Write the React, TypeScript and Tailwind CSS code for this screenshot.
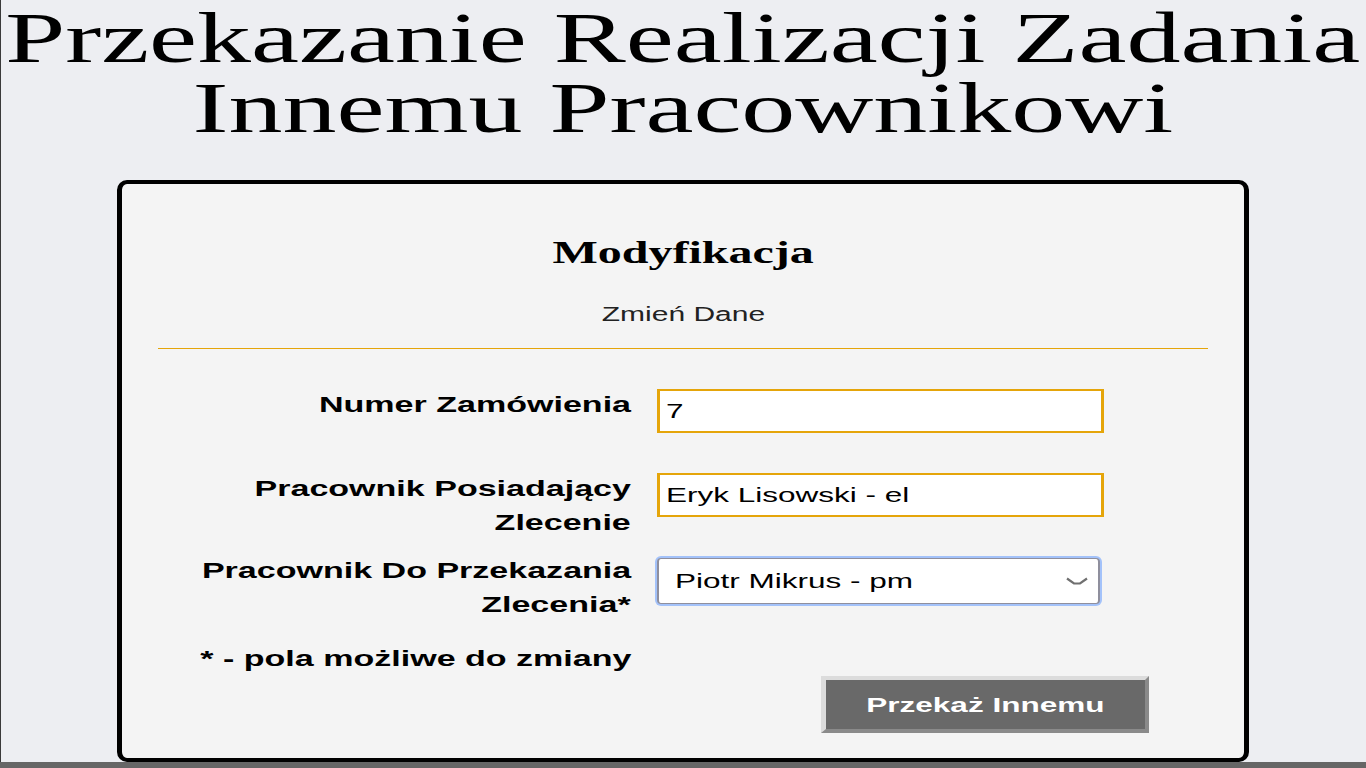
import type { ReactNode } from "react";
import clsx from "clsx";

// the page in the picture is stretched ~1.5x sideways, so text gets the same widening
function Wide({ children, className }: { children: ReactNode; className?: string }) {
  return <span className={clsx("inline-block scale-x-150", className)}>{children}</span>;
}

function Label({ lines }: { lines: string[] }) {
  return (
    <div className="w-[473px] shrink-0 text-right text-[22.7px] font-bold leading-[34px]">
      {lines.map((line) => (
        <span key={line} className="block">
          <Wide className="origin-right">{line}</Wide>
        </span>
      ))}
    </div>
  );
}

function Field({ value, className }: { value: string; className?: string }) {
  return (
    <div
      className={clsx(
        "flex h-[44px] w-[447px] items-center border-x-[3px] border-y-2 border-[#e5a50a] bg-white pl-[6px] text-[21px] leading-[24px]",
        className
      )}
    >
      <Wide className="origin-left">{value}</Wide>
    </div>
  );
}

export default function App() {
  return (
    <div className="min-h-[768px] bg-[#edeef2] font-['Liberation_Sans',Arial,sans-serif] text-black shadow-[inset_1px_0_0_#3a3a3a]">
      <h1 className="pt-[3px] text-center font-['Liberation_Serif','Times_New_Roman',serif] text-[72px] font-normal leading-[70px]">
        <span className="block">
          <Wide>Przekazanie Realizacji Zadania</Wide>
        </span>
        <span className="block">
          <Wide>Innemu Pracownikowi</Wide>
        </span>
      </h1>

      <div className="mx-auto mt-[37px] w-[1132px] rounded-[10px] border-x-[5px] border-y-4 border-black bg-[#f4f4f4] px-[36px] pt-[50px] pb-[25px]">
        <h2 className="text-center font-['Liberation_Serif','Times_New_Roman',serif] text-[32px] font-bold leading-[36px]">
          <Wide>Modyfikacja</Wide>
        </h2>
        <p className="mt-[32px] text-center text-[20px] leading-[24px] text-[#222]">
          <Wide>Zmień Dane</Wide>
        </p>
        <div className="mt-[22px] h-px bg-[#e5a50a]" />

        <div className="mt-[38px] flex items-start gap-[26px]">
          <Label lines={["Numer Zamówienia"]} />
          <Field className="mt-[2px]" value="7" />
        </div>

        <div className="mt-[38px] flex items-start gap-[26px]">
          <Label lines={["Pracownik Posiadający", "Zlecenie"]} />
          <Field className="mt-[2px]" value="Eryk Lisowski - el" />
        </div>

        <div className="mt-[14px] flex items-start gap-[26px]">
          <Label lines={["Pracownik Do Przekazania", "Zlecenia*"]} />
          <div className="mt-[5px] flex h-[46px] w-[443px] items-center justify-between rounded-[4px] border-x-2 border-y border-[#8f8f9d] bg-white pr-[10px] pl-[16px] text-[21px] leading-[24px] ring-2 ring-[#a3c2fa]">
            <Wide className="origin-left">Piotr Mikrus - pm</Wide>
            <svg width="22" height="9" viewBox="0 0 22 9" fill="none">
              <path d="M1 1.5 L8 6.5 H14 L21 1.5" stroke="#707070" strokeWidth="2.2" />
            </svg>
          </div>
        </div>

        <div className="mt-[20px] w-[473px] text-right text-[22.7px] font-bold leading-[34px]">
          <Wide className="origin-right">* - pola możliwe do zmiany</Wide>
        </div>

        <button
          type="button"
          className="mt-px ml-[663px] flex h-[57px] w-[328px] items-center justify-center border-y-4 border-r-4 border-l-[5px] border-t-[#dcdcdc] border-r-[#8a8a8a] border-b-[#8a8a8a] border-l-[#dcdcdc] bg-[#696969] text-[21px] font-bold leading-[24px] text-white"
        >
          <Wide>Przekaż Innemu</Wide>
        </button>
      </div>

      <div className="h-[6px] bg-[#666]" />
    </div>
  );
}
